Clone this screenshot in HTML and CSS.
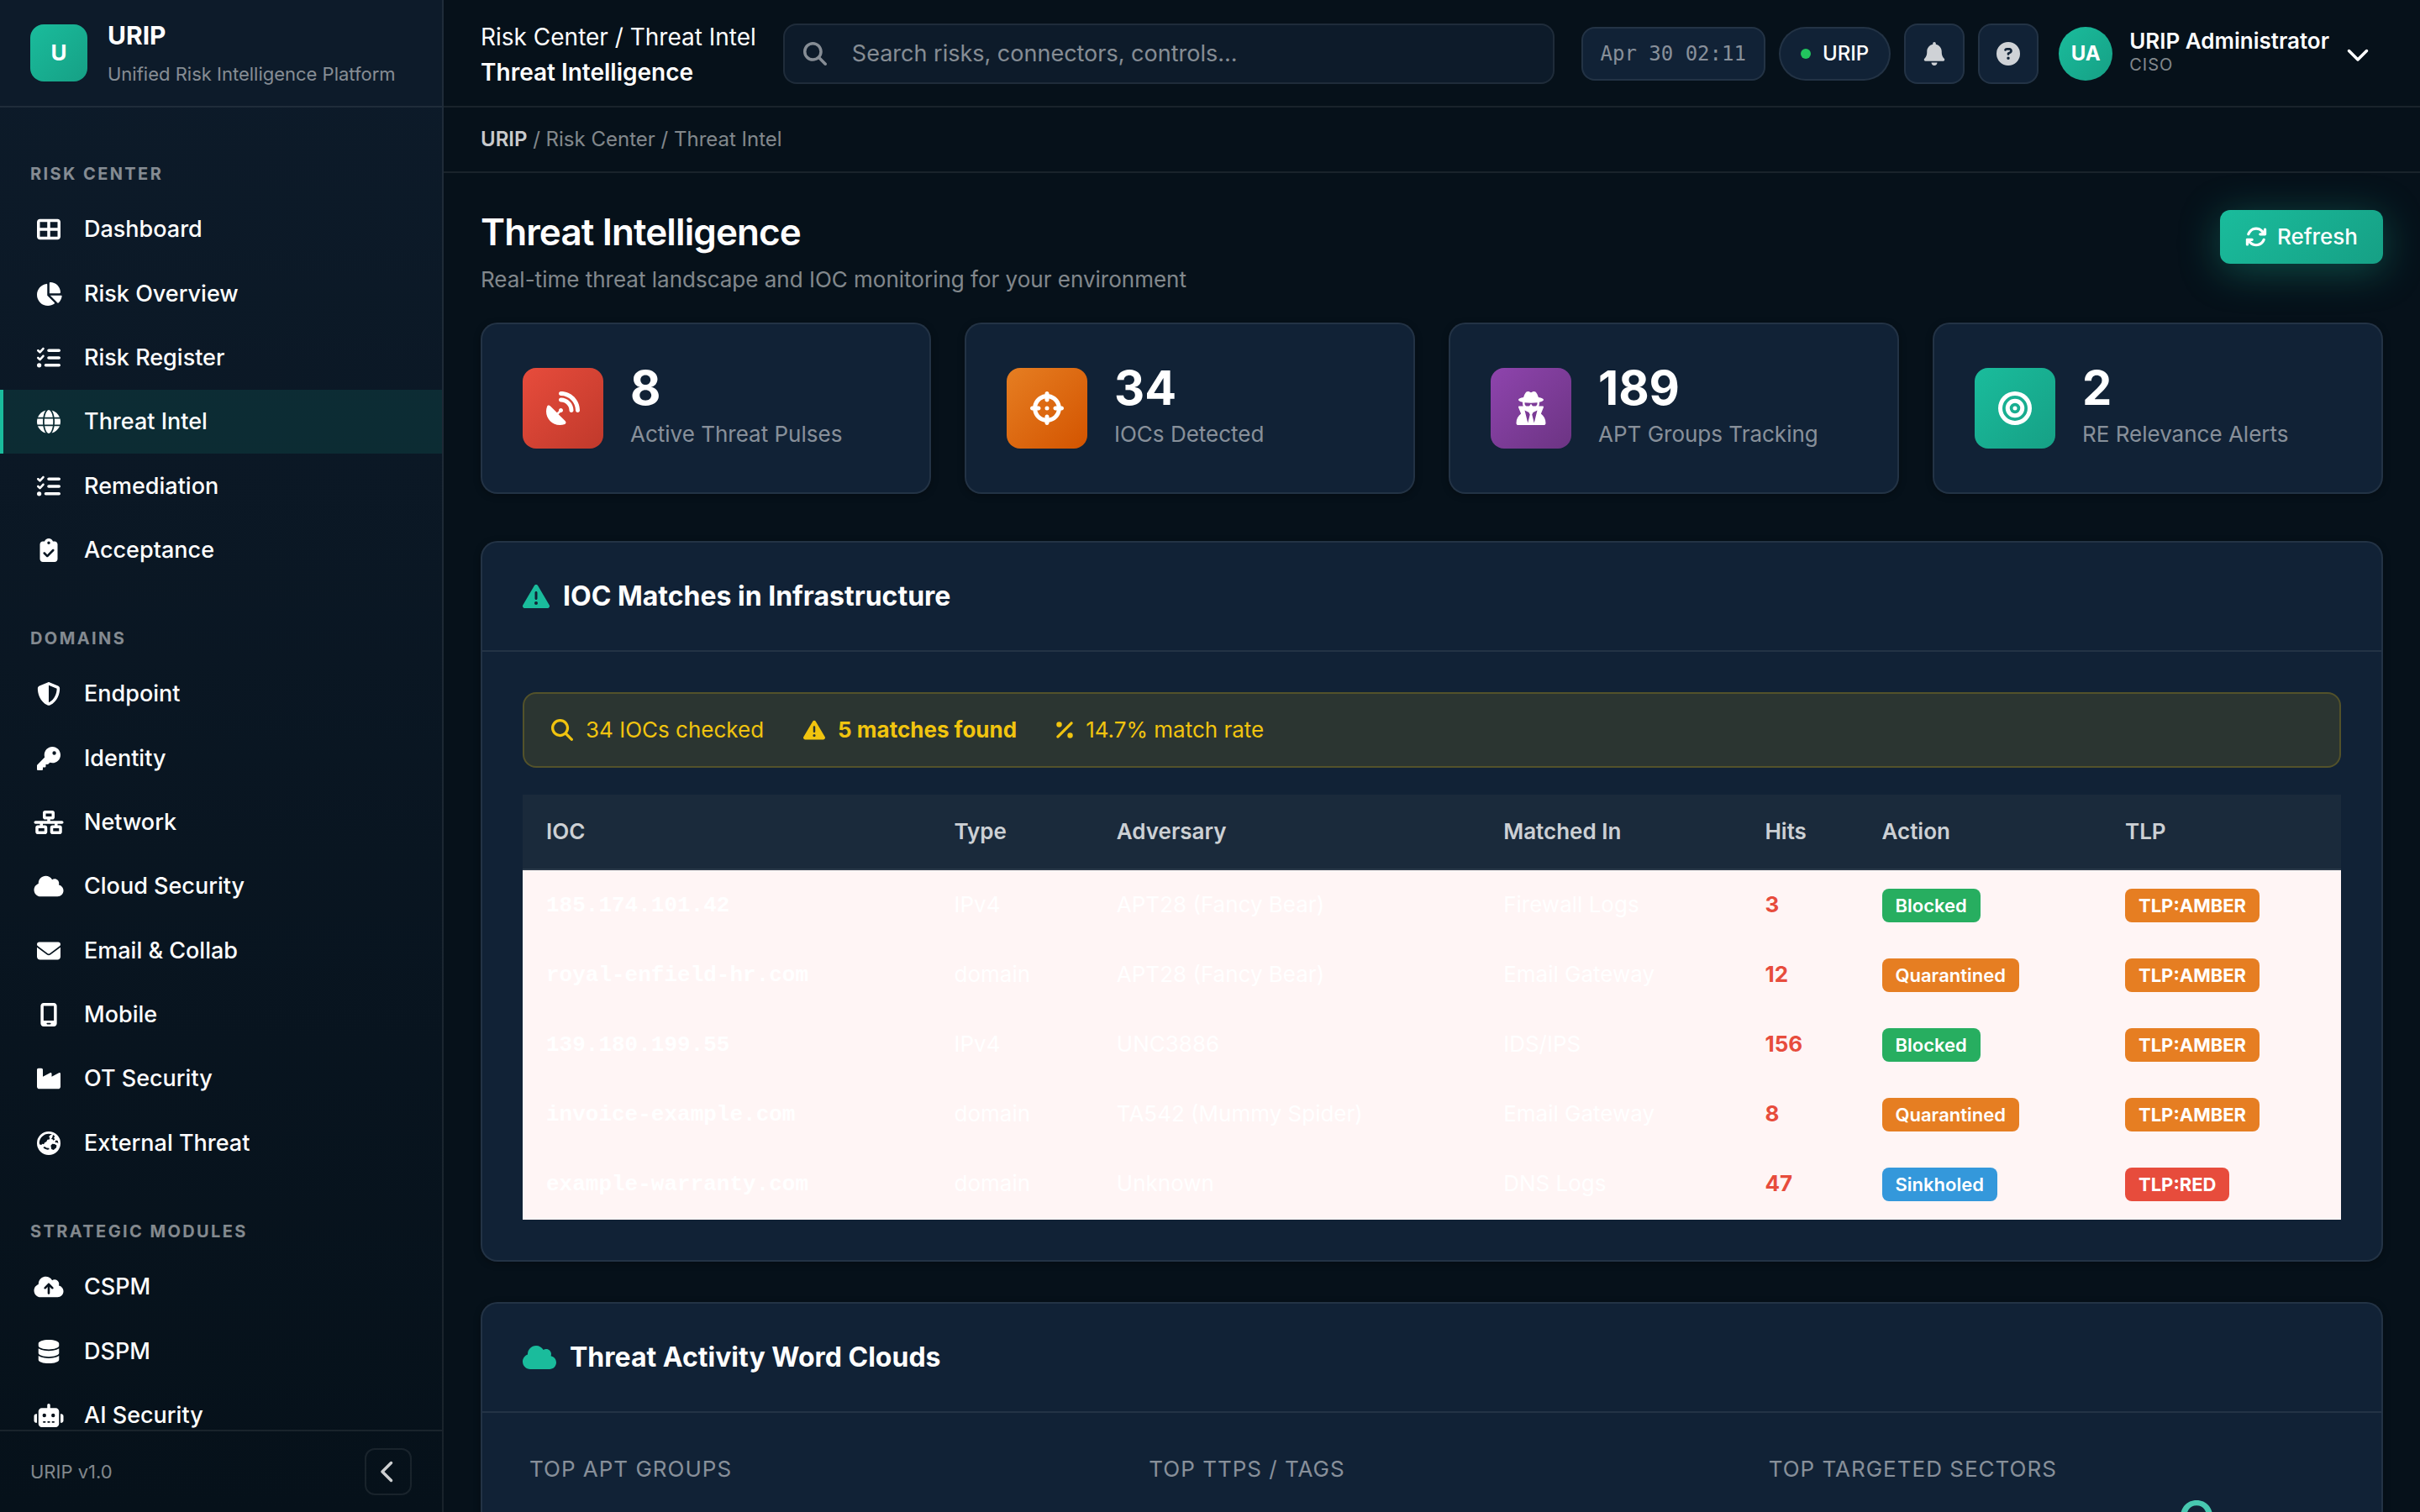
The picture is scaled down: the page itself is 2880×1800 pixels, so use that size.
FILE: index.html
```html
<!DOCTYPE html>
<html lang="en">
<head>
  <meta charset="UTF-8">
  <meta name="viewport" content="width=device-width, initial-scale=1.0">
  <title>URIP - Threat Intelligence</title>
  <link rel="stylesheet" href="styles.css">
</head>
<body>

<!-- Icon sprite -->
<svg class="sprite" aria-hidden="true">
  <symbol id="i-grid" viewBox="0 0 512 512"><path d="M448 96V224H288V96H448zm0 192V416H288V288H448zM224 224H64V96H224V224zM64 288H224V416H64V288zM64 32C28.700 32 0 60.700 0 96V416c0 35.300 28.700 64 64 64H448c35.300 0 64-28.700 64-64V96c0-35.300-28.700-64-64-64H64z"/></symbol>
  <symbol id="i-pie" viewBox="0 0 576 512"><path d="M304 240V16.600c0-9 7-16.600 16-16.600C443.700 0 544 100.300 544 224c0 9-7.600 16-16.600 16H304zM32 272C32 150.700 122.100 50.300 239 34.300c9.200-1.300 17 6.100 17 15.400V288L412.500 444.500c6.700 6.700 6.200 17.700-1.500 23.100C371.800 495.600 323.800 512 272 512C139.500 512 32 404.600 32 272zm526.400 16c9.300 0 16.600 7.800 15.400 17c-7.700 55.900-34.600 105.600-73.900 142.300c-6 5.600-15.400 5.200-21.200-.7L320 288H558.400z"/></symbol>
  <symbol id="i-list" viewBox="0 0 512 512"><path d="M152.100 38.200c9.900 8.900 10.700 24 1.800 33.900l-72 80c-4.400 4.900-10.600 7.800-17.200 7.900s-12.900-2.400-17.600-7L7 113C-2.300 103.600-2.300 88.400 7 79s24.600-9.400 33.900 0l22.100 22.100 55.100-61.200c8.900-9.900 24-10.700 33.900-1.800zm0 160c9.900 8.900 10.700 24 1.800 33.900l-72 80c-4.400 4.900-10.600 7.800-17.200 7.900s-12.900-2.400-17.600-7L7 273c-9.400-9.400-9.400-24.600 0-33.900s24.600-9.400 33.900 0l22.100 22.100 55.100-61.200c8.900-9.900 24-10.700 33.900-1.800zM224 96c0-17.700 14.300-32 32-32H480c17.700 0 32 14.300 32 32s-14.300 32-32 32H256c-17.700 0-32-14.300-32-32zm0 160c0-17.700 14.300-32 32-32H480c17.700 0 32 14.300 32 32s-14.300 32-32 32H256c-17.700 0-32-14.300-32-32zM160 416c0-17.700 14.300-32 32-32H480c17.700 0 32 14.300 32 32s-14.300 32-32 32H192c-17.700 0-32-14.300-32-32zM48 368a48 48 0 1 1 0 96 48 48 0 1 1 0-96z"/></symbol>
  <symbol id="i-globe" viewBox="0 0 512 512"><path d="M352 256c0 22.200-1.200 43.600-3.300 64H163.300c-2.200-20.400-3.300-41.800-3.300-64s1.200-43.600 3.300-64H348.700c2.200 20.400 3.300 41.800 3.300 64zm28.800-64H503.900c5.300 20.500 8.100 41.900 8.100 64s-2.800 43.500-8.100 64H380.800c2.100-20.600 3.200-42 3.200-64s-1.100-43.400-3.200-64zm112.600-32H376.700c-10-63.900-29.800-117.400-55.300-151.600c78.300 20.700 142 77.500 171.900 151.600zm-149.100 0H167.700c6.100-36.400 15.500-68.600 27-94.700c10.500-23.600 22.200-40.700 33.500-51.500C239.400 3.200 248.700 0 256 0s16.600 3.200 27.800 13.800c11.300 10.800 23 27.900 33.500 51.500c11.600 26 20.900 58.200 27 94.700zm-209 0H18.600C48.600 85.900 112.200 29.100 190.600 8.400C165.100 42.600 145.300 96.100 135.300 160zM8.100 192H131.200c-2.100 20.600-3.200 42-3.200 64s1.100 43.400 3.200 64H8.100C2.800 299.500 0 278.100 0 256s2.800-43.500 8.100-64zM194.700 446.600c-11.600-26-20.900-58.200-27-94.600H344.300c-6.100 36.400-15.500 68.600-27 94.600c-10.500 23.600-22.200 40.700-33.500 51.500C272.600 508.800 263.300 512 256 512s-16.600-3.200-27.800-13.800c-11.300-10.800-23-27.900-33.500-51.500zM135.300 352c10 63.900 29.800 117.400 55.300 151.600C112.200 482.900 48.600 426.100 18.600 352H135.300zm358.100 0c-30 74.100-93.600 130.900-171.900 151.600c25.500-34.200 45.200-87.700 55.300-151.600H493.400z"/></symbol>
  <symbol id="i-clipboard" viewBox="0 0 384 512"><path d="M192 0c-41.800 0-77.400 26.700-90.500 64H64C28.700 64 0 92.700 0 128V448c0 35.300 28.700 64 64 64H320c35.300 0 64-28.700 64-64V128c0-35.300-28.700-64-64-64H282.500C269.400 26.700 233.800 0 192 0zm0 64a32 32 0 1 1 0 64 32 32 0 1 1 0-64zM305 273L177 401c-9.400 9.400-24.600 9.400-33.900 0L79 337c-9.400-9.400-9.400-24.600 0-33.900s24.600-9.400 33.900 0l47 47L271 239c9.400-9.400 24.600-9.400 33.900 0s9.400 24.600 0 33.900z"/></symbol>
  <symbol id="i-shield" viewBox="0 0 512 512"><path d="M256 0c4.600 0 9.200 1 13.400 2.900L457.700 82.800c22 9.300 38.400 31 38.300 57.200c-.5 99.200-41.300 280.700-213.600 363.200c-16.700 8-36.100 8-52.800 0C57.300 420.700 16.500 239.200 16 140c-.1-26.200 16.300-47.900 38.300-57.200L242.700 2.900C246.800 1 251.400 0 256 0zm0 66.800V444.800C394 378 431.100 230.100 432 141.400L256 66.800z"/></symbol>
  <symbol id="i-key" viewBox="0 0 512 512"><path d="M336 352c97.200 0 176-78.800 176-176S433.200 0 336 0S160 78.800 160 176c0 18.700 2.900 36.800 8.300 53.700L7 391c-4.500 4.500-7 10.600-7 17v80c0 13.300 10.700 24 24 24h80c13.300 0 24-10.700 24-24V448h40c13.300 0 24-10.700 24-24V384h40c6.400 0 12.500-2.500 17-7l33.300-33.300c16.900 5.400 35 8.300 53.700 8.300zM376 96a40 40 0 1 1 0 80 40 40 0 1 1 0-80z"/></symbol>
  <symbol id="i-network" viewBox="0 0 640 512"><path d="M256 64H384v64H256V64zM240 0c-26.500 0-48 21.500-48 48v96c0 26.500 21.500 48 48 48h48v32H32c-17.700 0-32 14.300-32 32s14.300 32 32 32h96v32H80c-26.500 0-48 21.500-48 48v96c0 26.500 21.500 48 48 48H240c26.500 0 48-21.500 48-48V368c0-26.500-21.500-48-48-48H192V288H448v32H400c-26.500 0-48 21.500-48 48v96c0 26.500 21.500 48 48 48H560c26.500 0 48-21.500 48-48V368c0-26.500-21.500-48-48-48H512V288h96c17.700 0 32-14.300 32-32s-14.300-32-32-32H352V192h48c26.500 0 48-21.500 48-48V48c0-26.500-21.500-48-48-48H240zM96 448V384H224v64H96zm320-64H544v64H416V384z"/></symbol>
  <symbol id="i-cloud" viewBox="0 0 640 512"><path d="M0 336c0 79.500 64.500 144 144 144H512c70.700 0 128-57.300 128-128c0-61.900-44-113.600-102.400-125.400c4.100-10.700 6.400-22.400 6.400-34.600c0-53-43-96-96-96c-19.700 0-38.100 6-53.300 16.200C367 64.200 315.300 32 256 32C167.600 32 96 103.600 96 192c0 2.700 .1 5.400 .2 8.100C40.200 219.800 0 273.200 0 336z"/></symbol>
  <symbol id="i-mail" viewBox="0 0 512 512"><path d="M48 64C21.500 64 0 85.500 0 112c0 15.100 7.100 29.300 19.200 38.400L236.800 313.600c11.400 8.500 27 8.500 38.400 0L492.800 150.400c12.100-9.100 19.200-23.300 19.200-38.400c0-26.500-21.500-48-48-48H48zM0 176V384c0 35.300 28.700 64 64 64H448c35.300 0 64-28.700 64-64V176L294.400 339.200c-22.800 17.100-54 17.100-76.800 0L0 176z"/></symbol>
  <symbol id="i-mobile" viewBox="0 0 384 512"><path d="M16 64C16 28.700 44.700 0 80 0H304c35.300 0 64 28.700 64 64V448c0 35.300-28.700 64-64 64H80c-35.300 0-64-28.700-64-64V64zM144 448c0 8.800 7.200 16 16 16h64c8.800 0 16-7.200 16-16s-7.200-16-16-16H160c-8.800 0-16 7.200-16 16zM304 64H80V384H304V64z"/></symbol>
  <symbol id="i-factory" viewBox="0 0 512 512"><path d="M32 32C14.300 32 0 46.300 0 64V432c0 26.500 21.500 48 48 48H464c26.500 0 48-21.500 48-48V152.200c0-18.200-19.400-29.700-35.400-21.100L320 215.400V152.200c0-18.200-19.400-29.700-35.400-21.100L128 215.400V64c0-17.700-14.300-32-32-32H32z"/></symbol>
  <symbol id="i-earth" viewBox="0 0 512 512"><path fill-rule="evenodd" d="M256 0a256 256 0 1 1 0 512a256 256 0 1 1 0-512zM50 250c4-112 96-202 206-202c28 0 50 4 72 12l-36 18-34 38 22 20-10 36-42 8-24 46-36 16-20 38-34-10-18 22-36-8zM348 74l40 26-20 40 24 28-34 30-20-30-28-4 24-34zM452 200l12 60-30-22-32 4-8-26 22-22zM300 306l34-36 50 2 44 28-8 50-60 54-46-20zM168 330l40 26 54 6 4 26-40 8-62-20-30-30z"/></symbol>
  <symbol id="i-cloud-up" viewBox="0 0 640 512"><path d="M144 480C64.500 480 0 415.500 0 336c0-62.800 40.200-116.200 96.200-135.900c-.1-2.700-.2-5.400-.2-8.100c0-88.400 71.600-160 160-160c59.300 0 111 32.200 138.700 80.200C409.900 102 428.300 96 448 96c53 0 96 43 96 96c0 12.200-2.300 23.800-6.400 34.600C596 238.400 640 290.100 640 352c0 70.700-57.300 128-128 128H144zm79-217c-9.400 9.400-9.400 24.600 0 33.900s24.600 9.400 33.900 0l39-39V392c0 13.300 10.700 24 24 24s24-10.700 24-24V257.900l39 39c9.400 9.400 24.600 9.400 33.900 0s9.400-24.600 0-33.900l-80-80c-9.400-9.400-24.600-9.400-33.900 0l-80 80z"/></symbol>
  <symbol id="i-database" viewBox="0 0 448 512"><path d="M448 80v48c0 44.200-100.300 80-224 80S0 172.200 0 128V80C0 35.800 100.300 0 224 0S448 35.800 448 80zM393.200 214.700c20.800-7.400 39.900-16.900 54.800-28.600V288c0 44.200-100.300 80-224 80S0 332.200 0 288V186.100c14.900 11.800 34 21.200 54.800 28.600C99.700 230.700 159.500 240 224 240s124.300-9.300 169.200-25.300zM0 346.100c14.900 11.800 34 21.200 54.800 28.600C99.700 390.700 159.500 400 224 400s124.300-9.300 169.200-25.300c20.800-7.400 39.900-16.900 54.800-28.600V432c0 44.200-100.300 80-224 80S0 476.200 0 432V346.100z"/></symbol>
  <symbol id="i-robot" viewBox="0 0 640 512"><path d="M320 0c17.700 0 32 14.300 32 32V96H472c39.800 0 72 32.200 72 72V440c0 39.800-32.200 72-72 72H168c-39.800 0-72-32.200-72-72V168c0-39.800 32.200-72 72-72H288V32c0-17.700 14.300-32 32-32zM208 384c-8.800 0-16 7.200-16 16s7.200 16 16 16h32c8.800 0 16-7.200 16-16s-7.200-16-16-16H208zm96 0c-8.800 0-16 7.200-16 16s7.200 16 16 16h32c8.800 0 16-7.200 16-16s-7.200-16-16-16H304zm96 0c-8.800 0-16 7.200-16 16s7.200 16 16 16h32c8.800 0 16-7.200 16-16s-7.200-16-16-16H400zM264 256a40 40 0 1 0 -80 0 40 40 0 1 0 80 0zm152 40a40 40 0 1 0 0-80 40 40 0 1 0 0 80zM48 224H64V416H48c-26.500 0-48-21.500-48-48V272c0-26.500 21.500-48 48-48zm544 0c26.500 0 48 21.500 48 48v96c0 26.500-21.500 48-48 48H576V224h16z"/></symbol>
  <symbol id="i-left" viewBox="0 0 320 512"><path d="M9.400 233.400c-12.500 12.500-12.500 32.800 0 45.300l192 192c12.500 12.500 32.800 12.500 45.300 0s12.500-32.800 0-45.300L77.300 256 246.600 86.600c12.500-12.500 12.500-32.800 0-45.300s-32.800-12.500-45.300 0l-192 192z"/></symbol>
  <symbol id="i-down" viewBox="0 0 512 512"><path d="M233.400 406.600c12.500 12.500 32.800 12.500 45.300 0l192-192c12.500-12.500 12.500-32.800 0-45.300s-32.800-12.500-45.300 0L256 338.700 86.600 169.400c-12.500-12.500-32.800-12.500-45.300 0s-12.500 32.800 0 45.300l192 192z"/></symbol>
  <symbol id="i-search" viewBox="0 0 512 512"><path d="M416 208c0 45.900-14.900 88.300-40 122.700L502.600 457.400c12.500 12.500 12.500 32.800 0 45.300s-32.800 12.500-45.300 0L330.700 376c-34.400 25.200-76.800 40-122.700 40C93.100 416 0 322.900 0 208S93.100 0 208 0S416 93.100 416 208zM208 352a144 144 0 1 0 0-288 144 144 0 1 0 0 288z"/></symbol>
  <symbol id="i-bell" viewBox="0 0 448 512"><path d="M224 0c-17.700 0-32 14.300-32 32V51.200C119 66 64 130.600 64 208v18.800c0 47-17.300 92.400-48.500 127.600l-7.400 8.300c-8.400 9.400-10.400 22.900-5.300 34.400S19.400 416 32 416H416c12.600 0 24-7.400 29.200-18.900s3.100-25-5.300-34.400l-7.400-8.300C401.300 319.200 384 273.900 384 226.800V208c0-77.400-55-142-128-156.800V32c0-17.700-14.300-32-32-32zm45.300 493.300c12-12 18.700-28.300 18.700-45.300H160c0 17 6.700 33.300 18.700 45.300s28.300 18.700 45.300 18.700s33.300-6.700 45.300-18.700z"/></symbol>
  <symbol id="i-help" viewBox="0 0 512 512"><path d="M256 512A256 256 0 1 0 256 0a256 256 0 1 0 0 512zM169.800 165.300c7.900-22.300 29.100-37.300 52.800-37.300h58.300c34.900 0 63.100 28.300 63.100 63.100c0 22.600-12.100 43.500-31.700 54.800L280 264.400c-.2 13-10.900 23.600-24 23.600c-13.300 0-24-10.700-24-24V250.500c0-8.600 4.600-16.500 12.100-20.800l44.300-25.400c4.700-2.700 7.600-7.700 7.600-13.100c0-8.400-6.800-15.100-15.100-15.100H222.600c-3.400 0-6.400 2.100-7.500 5.300l-.4 1.200c-4.400 12.500-18.200 19-30.600 14.600s-19-18.200-14.600-30.600l.4-1.200zM224 352a32 32 0 1 1 64 0 32 32 0 1 1 -64 0z"/></symbol>
  <symbol id="i-refresh" viewBox="0 0 512 512"><path d="M105.100 202.600c7.700-21.800 20.200-42.300 37.800-59.800c62.500-62.500 163.800-62.500 226.300 0L386.300 160H352c-17.700 0-32 14.300-32 32s14.300 32 32 32H463.900c17.700 0 32-14.300 32-32V80c0-17.700-14.300-32-32-32s-32 14.300-32 32v35.200L414.400 97.600c-87.500-87.500-229.300-87.500-316.800 0C73.200 122 55.600 150.700 44.800 181.400c-5.900 16.700 2.900 34.900 19.500 40.800s34.900-2.900 40.800-19.500zM39 289.300c-5 1.500-9.800 4.200-13.700 8.200c-4 4-6.700 8.800-8.100 14c-.3 1.200-.6 2.500-.8 3.800c-.3 1.700-.4 3.400-.4 5.100V432c0 17.700 14.300 32 32 32s32-14.300 32-32V396.900l17.600 17.500c87.500 87.400 229.300 87.400 316.700 0c24.400-24.400 42.100-53.100 52.900-83.700c5.900-16.700-2.900-34.900-19.500-40.800s-34.900 2.900-40.800 19.500c-7.700 21.800-20.200 42.300-37.800 59.800c-62.500 62.500-163.800 62.500-226.300 0l-.1-.1L125.600 352H160c17.700 0 32-14.300 32-32s-14.300-32-32-32H48.400c-1.600 0-3.200 .1-4.800 .3s-3.100 .5-4.600 1z"/></symbol>
  <symbol id="i-dish" viewBox="0 0 512 512"><path d="M192 32c0-17.700 14.300-32 32-32C383.100 0 512 128.900 512 288c0 17.700-14.300 32-32 32s-32-14.300-32-32C448 164.300 347.700 64 224 64c-17.700 0-32-14.300-32-32zM60.600 220.600L164.700 324.700l28.400-28.400c-.7-2.600-1.100-5.400-1.100-8.300c0-17.700 14.300-32 32-32s32 14.300 32 32s-14.300 32-32 32c-2.900 0-5.600-.4-8.300-1.100l-28.400 28.400L291.400 451.400c14.500 14.500 11.800 38.800-7.300 46.300C260.500 506.900 234.900 512 208 512C93.100 512 0 418.900 0 304c0-26.900 5.100-52.500 14.400-76.100c7.500-19 31.800-21.800 46.300-7.300zM224 96c106 0 192 86 192 192c0 17.700-14.300 32-32 32s-32-14.300-32-32c0-70.700-57.300-128-128-128c-17.700 0-32-14.300-32-32s14.300-32 32-32z"/></symbol>
  <symbol id="i-crosshairs" viewBox="0 0 512 512"><path d="M256 0c17.700 0 32 14.300 32 32V42.400c93.700 13.900 167.700 88 181.600 181.600H480c17.700 0 32 14.300 32 32s-14.300 32-32 32H469.600c-13.900 93.700-88 167.700-181.600 181.600V480c0 17.700-14.300 32-32 32s-32-14.300-32-32V469.600C130.300 455.700 56.300 381.700 42.400 288H32c-17.700 0-32-14.300-32-32s14.300-32 32-32H42.400C56.300 130.300 130.300 56.300 224 42.400V32c0-17.700 14.300-32 32-32zM107.400 288c12.500 58.300 58.400 104.100 116.600 116.600V384c0-17.700 14.300-32 32-32s32 14.300 32 32v20.600c58.300-12.500 104.100-58.400 116.600-116.600H384c-17.700 0-32-14.300-32-32s14.300-32 32-32h20.600C392.100 165.700 346.300 119.900 288 107.400V128c0 17.700-14.300 32-32 32s-32-14.300-32-32V107.400C165.700 119.900 119.900 165.700 107.400 224H128c17.700 0 32 14.300 32 32s-14.300 32-32 32H107.400zM256 224a32 32 0 1 1 0 64 32 32 0 1 1 0-64z"/></symbol>
  <symbol id="i-spy" viewBox="0 0 448 512"><path d="M224 16c-6.700 0-10.800-2.800-15.500-6.100C201.900 5.400 194 0 176 0c-30.500 0-52 43.700-66 89.400C62.700 98.100 32 112.200 32 128c0 14.300 25 27.100 64.600 35.900c-.4 4-.6 8-.6 12.100c0 17 3.300 33.200 9.300 48H45.400C38 224 32 230 32 237.400c0 1.700 .3 3.400 1 5l38.800 96.900C28.200 371.800 0 423.800 0 482.300C0 498.700 13.300 512 29.700 512H418.300c16.400 0 29.700-13.300 29.700-29.700c0-58.500-28.200-110.400-71.700-143L415 242.400c.6-1.600 1-3.300 1-5c0-7.400-6-13.400-13.400-13.400H342.700c6-14.800 9.300-31 9.300-48c0-4.100-.2-8.100-.6-12.100C391 155.100 416 142.300 416 128c0-15.800-30.700-29.900-78-38.600C324 43.700 302.500 0 272 0c-18 0-25.900 5.400-32.500 9.900c-4.800 3.300-8.800 6.100-15.500 6.100zm56 208H267.600c-16.500 0-31.100-10.600-36.300-26.200c-2.300-7-12.200-7-14.500 0c-5.200 15.600-19.900 26.200-36.300 26.200H168c-22.100 0-40-17.900-40-40V169.600c28.200 4.100 61 6.400 96 6.400s67.800-2.300 96-6.400V184c0 22.100-17.900 40-40 40zm-88 96l16 32L176 480 128 288l64 32zm128-32L272 480 240 352l16-32 64-32z"/></symbol>
  <symbol id="i-bullseye" viewBox="0 0 512 512"><path d="M448 256A192 192 0 1 0 64 256a192 192 0 1 0 384 0zM0 256a256 256 0 1 1 512 0A256 256 0 1 1 0 256zm256 80a80 80 0 1 0 0-160 80 80 0 1 0 0 160zm0-224a144 144 0 1 1 0 288 144 144 0 1 1 0-288zM224 256a32 32 0 1 1 64 0 32 32 0 1 1 -64 0z"/></symbol>
  <symbol id="i-warning" viewBox="0 0 512 512"><path d="M256 32c14.200 0 27.300 7.500 34.500 19.800l216 368c7.300 12.400 7.300 27.700 .2 40.100S486.300 480 472 480H40c-14.300 0-27.600-7.700-34.700-20.100s-7-27.800 .2-40.100l216-368C228.700 39.500 241.800 32 256 32zm0 128c-13.300 0-24 10.700-24 24V296c0 13.300 10.700 24 24 24s24-10.700 24-24V184c0-13.300-10.700-24-24-24zm32 224a32 32 0 1 0 -64 0 32 32 0 1 0 64 0z"/></symbol>
  <symbol id="i-percent" viewBox="0 0 384 512"><path d="M374.600 118.600c12.500-12.500 12.500-32.800 0-45.300s-32.800-12.500-45.300 0l-320 320c-12.500 12.500-12.500 32.800 0 45.300s32.800 12.500 45.300 0l320-320zM128 128A64 64 0 1 0 0 128a64 64 0 1 0 128 0zM384 384a64 64 0 1 0 -128 0 64 64 0 1 0 128 0z"/></symbol>
</svg>

<div class="app">
  <aside class="sidebar">
    <div class="brand">
      <div class="brand-logo">U</div>
      <div class="brand-text">
        <div class="brand-name">URIP</div>
        <div class="brand-sub">Unified Risk Intelligence Platform</div>
      </div>
    </div>

    <nav class="nav">
      <section class="nav-section">
        <h2 class="nav-label">Risk Center</h2>
        <a href="#" class="nav-link"><span class="nav-icon"><svg class="icon"><use href="#i-grid"/></svg></span>Dashboard</a>
        <a href="#" class="nav-link"><span class="nav-icon"><svg class="icon icon-pie"><use href="#i-pie"/></svg></span>Risk Overview</a>
        <a href="#" class="nav-link"><span class="nav-icon"><svg class="icon"><use href="#i-list"/></svg></span>Risk Register</a>
        <a href="#" class="nav-link active"><span class="nav-icon"><svg class="icon"><use href="#i-globe"/></svg></span>Threat Intel</a>
        <a href="#" class="nav-link"><span class="nav-icon"><svg class="icon"><use href="#i-list"/></svg></span>Remediation</a>
        <a href="#" class="nav-link"><span class="nav-icon"><svg class="icon"><use href="#i-clipboard"/></svg></span>Acceptance</a>
      </section>
      <section class="nav-section">
        <h2 class="nav-label">Domains</h2>
        <a href="#" class="nav-link"><span class="nav-icon"><svg class="icon"><use href="#i-shield"/></svg></span>Endpoint</a>
        <a href="#" class="nav-link"><span class="nav-icon"><svg class="icon"><use href="#i-key"/></svg></span>Identity</a>
        <a href="#" class="nav-link"><span class="nav-icon"><svg class="icon icon-wide"><use href="#i-network"/></svg></span>Network</a>
        <a href="#" class="nav-link"><span class="nav-icon"><svg class="icon icon-wide"><use href="#i-cloud"/></svg></span>Cloud Security</a>
        <a href="#" class="nav-link"><span class="nav-icon"><svg class="icon"><use href="#i-mail"/></svg></span>Email &amp; Collab</a>
        <a href="#" class="nav-link"><span class="nav-icon"><svg class="icon"><use href="#i-mobile"/></svg></span>Mobile</a>
        <a href="#" class="nav-link"><span class="nav-icon"><svg class="icon"><use href="#i-factory"/></svg></span>OT Security</a>
        <a href="#" class="nav-link"><span class="nav-icon"><svg class="icon"><use href="#i-earth"/></svg></span>External Threat</a>
      </section>
      <section class="nav-section">
        <h2 class="nav-label">Strategic Modules</h2>
        <a href="#" class="nav-link"><span class="nav-icon"><svg class="icon icon-wide"><use href="#i-cloud-up"/></svg></span>CSPM</a>
        <a href="#" class="nav-link"><span class="nav-icon"><svg class="icon"><use href="#i-database"/></svg></span>DSPM</a>
        <a href="#" class="nav-link"><span class="nav-icon"><svg class="icon icon-wide"><use href="#i-robot"/></svg></span>AI Security</a>
      </section>
    </nav>

    <div class="sidebar-footer">
      <span>URIP v1.0</span>
      <button type="button" class="collapse-btn" aria-label="Collapse sidebar"><svg class="icon"><use href="#i-left"/></svg></button>
    </div>
  </aside>

  <div class="page">
    <header class="topbar">
      <div class="topbar-title">
        <div>Risk Center / Threat Intel</div>
        <strong>Threat Intelligence</strong>
      </div>
      <label class="search">
        <svg class="icon"><use href="#i-search"/></svg>
        <input type="search" placeholder="Search risks, connectors, controls..." aria-label="Search">
      </label>
      <div class="topbar-tools">
        <time class="clock">Apr 30 02:11</time>
        <div class="tenant"><span class="dot"></span>URIP</div>
        <button type="button" class="icon-btn" aria-label="Notifications"><svg class="icon"><use href="#i-bell"/></svg></button>
        <button type="button" class="icon-btn" aria-label="Help"><svg class="icon"><use href="#i-help"/></svg></button>
        <button type="button" class="user">
          <span class="avatar">UA</span>
          <span class="user-text">
            <span class="user-name">URIP Administrator</span>
            <span class="user-role">CISO</span>
          </span>
          <svg class="icon"><use href="#i-down"/></svg>
        </button>
      </div>
    </header>

    <div class="breadcrumb"><strong>URIP</strong> / Risk Center / Threat Intel</div>

    <main class="content">
      <div class="page-header">
        <div>
          <h1>Threat Intelligence</h1>
          <p>Real-time threat landscape and IOC monitoring for your environment</p>
        </div>
        <button type="button" class="btn-refresh"><svg class="icon"><use href="#i-refresh"/></svg>Refresh</button>
      </div>

      <div class="stats">
        <div class="stat">
          <div class="stat-icon red"><svg class="icon"><use href="#i-dish"/></svg></div>
          <div><div class="stat-value">8</div><div class="stat-label">Active Threat Pulses</div></div>
        </div>
        <div class="stat">
          <div class="stat-icon orange"><svg class="icon"><use href="#i-crosshairs"/></svg></div>
          <div><div class="stat-value">34</div><div class="stat-label">IOCs Detected</div></div>
        </div>
        <div class="stat">
          <div class="stat-icon purple"><svg class="icon"><use href="#i-spy"/></svg></div>
          <div><div class="stat-value">189</div><div class="stat-label">APT Groups Tracking</div></div>
        </div>
        <div class="stat">
          <div class="stat-icon teal"><svg class="icon"><use href="#i-bullseye"/></svg></div>
          <div><div class="stat-value">2</div><div class="stat-label">RE Relevance Alerts</div></div>
        </div>
      </div>

      <section class="card">
        <div class="card-header">
          <svg class="icon"><use href="#i-warning"/></svg>
          <h2>IOC Matches in Infrastructure</h2>
        </div>
        <div class="card-body">
          <div class="match-summary">
            <span><svg class="icon"><use href="#i-search"/></svg>34 IOCs checked</span>
            <strong><svg class="icon"><use href="#i-warning"/></svg>5 matches found</strong>
            <span><svg class="icon icon-percent"><use href="#i-percent"/></svg>14.7% match rate</span>
          </div>
          <table class="ioc-table">
            <thead>
              <tr><th>IOC</th><th>Type</th><th>Adversary</th><th>Matched In</th><th>Hits</th><th>Action</th><th>TLP</th></tr>
            </thead>
            <tbody>
              <tr>
                <td><code>185.174.101.42</code></td><td>IPv4</td><td>APT28 (Fancy Bear)</td><td>Firewall Logs</td>
                <td class="hits">3</td><td><span class="badge green">Blocked</span></td><td><span class="badge tlp amber">TLP:AMBER</span></td>
              </tr>
              <tr>
                <td><code>royal-enfield-hr.com</code></td><td>domain</td><td>APT28 (Fancy Bear)</td><td>Email Gateway</td>
                <td class="hits">12</td><td><span class="badge amber">Quarantined</span></td><td><span class="badge tlp amber">TLP:AMBER</span></td>
              </tr>
              <tr>
                <td><code>139.180.199.55</code></td><td>IPv4</td><td>UNC3886</td><td>IDS/IPS</td>
                <td class="hits">156</td><td><span class="badge green">Blocked</span></td><td><span class="badge tlp amber">TLP:AMBER</span></td>
              </tr>
              <tr>
                <td><code>invoice-example.com</code></td><td>domain</td><td>TA542 (Mummy Spider)</td><td>Email Gateway</td>
                <td class="hits">8</td><td><span class="badge amber">Quarantined</span></td><td><span class="badge tlp amber">TLP:AMBER</span></td>
              </tr>
              <tr>
                <td><code>example-warranty.com</code></td><td>domain</td><td>Unknown</td><td>DNS Logs</td>
                <td class="hits">47</td><td><span class="badge blue">Sinkholed</span></td><td><span class="badge tlp crimson">TLP:RED</span></td>
              </tr>
            </tbody>
          </table>
        </div>
      </section>

      <section class="card">
        <div class="card-header">
          <svg class="icon icon-wide"><use href="#i-cloud"/></svg>
          <h2>Threat Activity Word Clouds</h2>
        </div>
        <div class="card-body clouds">
          <div class="cloud"><h3>Top APT Groups</h3></div>
          <div class="cloud"><h3>Top TTPs / Tags</h3></div>
          <div class="cloud"><h3>Top Targeted Sectors</h3><div class="cloud-canvas"><span class="cloud-word">o</span></div></div>
        </div>
      </section>
    </main>
  </div>
</div>

</body>
</html>
```
FILE: styles.css
```css
:root {
  --bg: #06111a;
  --surface: #0d1b2a;
  --card: #112236;
  --line: rgba(255, 255, 255, 0.08);
  --muted: rgba(255, 255, 255, 0.5);
  --soft: rgba(255, 255, 255, 0.8);
  --teal: #1abc9c;
  --teal-dark: #16a085;
}
* {
  box-sizing: border-box;
}
body {
  margin: 0;
  background: var(--bg);
  color: #fff;
  font-family: Inter, "Liberation Sans", sans-serif;
  font-size: 28px;
  line-height: 42px;
  -webkit-font-smoothing: antialiased;
}
h1, h2, h3, p {
  margin: 0;
}
button, input {
  font: inherit;
  color: inherit;
}
a {
  color: inherit;
  text-decoration: none;
}
.sprite {
  display: none;
}
.icon {
  width: 28px;
  height: 28px;
  flex: none;
  fill: currentColor;
}
.icon-wide {
  width: 36px;
}
.icon-pie {
  width: 32px;
}
.app {
  display: grid;
  grid-template-columns: 528px 1fr;
  height: 100vh;
  overflow: hidden;
}

/* Sidebar */
.sidebar {
  display: flex;
  flex-direction: column;
  min-height: 0;
  border-right: 2px solid var(--line);
  background: linear-gradient(180deg, #0d1b2a, #06111a);
}
.brand {
  display: flex;
  align-items: center;
  gap: 24px;
  height: 128px;
  padding: 0 36px;
  border-bottom: 2px solid var(--line);
  background: var(--surface);
}
.brand-logo {
  display: grid;
  place-items: center;
  width: 68px;
  height: 68px;
  border-radius: 16px;
  background: linear-gradient(135deg, var(--teal), var(--teal-dark));
  font-size: 26px;
  font-weight: 700;
}
.brand-text {
  padding-top: 4px;
}
.brand-name {
  margin-bottom: 4px;
  font-size: 30px;
  font-weight: 700;
}
.brand-sub {
  font-size: 22px;
  color: var(--muted);
}
.nav {
  flex: 1;
  min-height: 0;
  padding-top: 25px;
  overflow-y: auto;
  scrollbar-width: none;
}
.nav-section {
  padding: 42px 0 13px;
}
.nav-label {
  margin-bottom: 16px;
  padding-left: 36px;
  font-size: 20px;
  font-weight: 700;
  line-height: 24px;
  letter-spacing: 0.12em;
  text-transform: uppercase;
  color: var(--muted);
}
.nav-link {
  display: flex;
  align-items: center;
  gap: 24px;
  height: 76px;
  padding-left: 36px;
  border-left: 4px solid transparent;
  font-size: 27px;
  font-weight: 500;
}
.nav-link:nth-child(3n) {
  height: 77px;
}
.nav-link.active {
  border-color: var(--teal);
  background: rgba(26, 188, 156, 0.12);
}
.nav-icon {
  display: grid;
  place-items: center;
  width: 36px;
}
.sidebar-footer {
  display: flex;
  align-items: center;
  justify-content: space-between;
  padding: 20px 36px;
  border-top: 2px solid var(--line);
  font-size: 22px;
  color: var(--muted);
}
.collapse-btn {
  display: grid;
  place-items: center;
  width: 56px;
  height: 56px;
  padding: 0;
  border: 2px solid var(--line);
  border-radius: 12px;
  background: none;
  color: var(--soft);
}

/* Top bar */
.page {
  display: flex;
  flex-direction: column;
  min-width: 0;
  min-height: 0;
}
.topbar {
  display: flex;
  align-items: center;
  gap: 32px;
  padding: 28px 44px 26px;
  border-bottom: 2px solid var(--line);
}
.topbar-title {
  margin: -8px 0;
  padding-top: 2px;
  white-space: nowrap;
}
.topbar-title strong {
  display: block;
  font-weight: 600;
}
.search {
  display: flex;
  align-items: center;
  flex: 1;
  gap: 30px;
  height: 72px;
  padding: 0 22px;
  border: 2px solid var(--line);
  border-radius: 16px;
  background: var(--surface);
  color: var(--muted);
}
.search input {
  flex: 1;
  min-width: 0;
  padding: 0;
  border: 0;
  outline: 0;
  background: none;
  font-size: 27px;
}
.search input::placeholder {
  color: var(--muted);
}
.topbar-tools {
  display: flex;
  align-items: center;
  gap: 16px;
}
.clock, .tenant {
  display: flex;
  align-items: center;
  height: 64px;
  padding: 0 21px;
  border: 2px solid var(--line);
  border-radius: 16px;
  background: var(--card);
  font-size: 24px;
}
.clock {
  font-family: "DejaVu Sans Mono", monospace;
  color: var(--muted);
}
.tenant {
  gap: 14px;
  padding: 0 24px;
  border-radius: 32px;
  font-weight: 500;
}
.dot {
  width: 12px;
  height: 12px;
  border-radius: 50%;
  background: #22c55e;
}
.icon-btn {
  display: grid;
  place-items: center;
  width: 72px;
  height: 72px;
  padding: 0;
  border: 2px solid var(--line);
  border-radius: 16px;
  background: var(--card);
  color: var(--soft);
}
.user {
  display: flex;
  align-items: center;
  gap: 20px;
  padding: 0 16px 0 8px;
  border: 0;
  background: none;
  text-align: left;
}
.avatar {
  display: grid;
  place-items: center;
  width: 64px;
  height: 64px;
  border-radius: 50%;
  background: linear-gradient(135deg, var(--teal), var(--teal-dark));
  font-size: 24px;
  font-weight: 700;
}
.user-text {
  display: flex;
  flex-direction: column;
  padding-bottom: 6px;
}
.user-name {
  font-size: 26px;
  font-weight: 600;
  line-height: 32px;
}
.user-role {
  font-size: 20px;
  line-height: 24px;
  letter-spacing: 1px;
  color: var(--muted);
}
.breadcrumb {
  padding: 18px 44px;
  border-bottom: 2px solid var(--line);
  font-size: 24px;
  line-height: 40px;
  color: var(--muted);
}
.breadcrumb strong {
  font-weight: 600;
  color: var(--soft);
}

/* Content */
.content {
  flex: 1;
  min-height: 0;
  padding: 44px;
  overflow-y: auto;
  scrollbar-width: none;
}
.page-header {
  display: flex;
  align-items: flex-start;
  justify-content: space-between;
  margin-bottom: 31px;
}
.page-header h1 {
  margin-bottom: 11px;
  font-size: 44px;
  font-weight: 600;
  line-height: 52px;
  letter-spacing: -0.02em;
}
.page-header p {
  line-height: 40px;
  font-size: 26px;
  color: var(--muted);
}
.btn-refresh {
  display: flex;
  align-items: center;
  gap: 12px;
  height: 64px;
  padding: 0 28px;
  border: 2px solid transparent;
  border-radius: 12px;
  background: linear-gradient(135deg, var(--teal), var(--teal-dark)) border-box;
  box-shadow: 0 8px 48px rgba(26, 188, 156, 0.35);
  font-size: 26px;
  font-weight: 500;
}
.btn-refresh .icon {
  width: 26px;
  height: 26px;
}
.stats {
  display: grid;
  grid-template-columns: repeat(4, 1fr);
  gap: 40px;
  margin-bottom: 56px;
}
.stat, .card {
  border: 2px solid var(--line);
  border-radius: 20px;
  background: var(--card);
  box-shadow: 0 2px 8px rgba(0, 0, 0, 0.3);
}
.stat {
  display: flex;
  align-items: center;
  gap: 32px;
  padding: 48px;
}
.stat-icon {
  display: grid;
  place-items: center;
  flex: none;
  width: 96px;
  height: 96px;
  border-radius: 16px;
}
.stat-icon .icon {
  width: 40px;
  height: 40px;
}
.stat-value {
  margin-bottom: 6px;
  font-size: 56px;
  font-weight: 700;
  line-height: 56px;
}
.stat-label {
  font-size: 26px;
  color: var(--muted);
}
.red {
  background: linear-gradient(135deg, #e74c3c, #c0392b);
}
.orange {
  background: linear-gradient(135deg, #e67e22, #d35400);
}
.purple {
  background: linear-gradient(135deg, #8e44ad, #6c3483);
}
.teal {
  background: linear-gradient(135deg, var(--teal), var(--teal-dark));
}
.card {
  margin-bottom: 48px;
}
.card-header {
  display: flex;
  align-items: center;
  gap: 16px;
  padding: 48px;
  border-bottom: 2px solid var(--line);
}
.card-header h2 {
  font-size: 32px;
  font-weight: 700;
  line-height: 32px;
}
.card-header .icon {
  width: 32px;
  height: 32px;
  color: var(--teal);
}
.card-header .icon-wide {
  width: 40px;
}
.card-body {
  padding: 48px;
}
.match-summary {
  display: flex;
  gap: 47px;
  margin-bottom: 32px;
  padding: 22px 32px;
  border: 2px solid rgba(241, 196, 15, 0.2);
  border-radius: 16px;
  background: rgba(241, 196, 15, 0.12);
  color: #f1c40f;
  font-size: 26px;
}
.match-summary > * {
  display: flex;
  align-items: center;
  gap: 15px;
}
.match-summary .icon {
  width: 26px;
  height: 26px;
}
.match-summary .icon-percent {
  width: 20px;
}

/* IOC table */
.ioc-table {
  width: 100%;
  border-spacing: 0;
  font-size: 26px;
  text-align: left;
}
.ioc-table th {
  height: 90px;
  padding: 0 28px;
  border-bottom: 2px solid var(--line);
  background: #1a2a3b;
  color: var(--soft);
  font-weight: 600;
}
.ioc-table td {
  height: 83px;
  padding: 0 28px;
  border-bottom: 2px solid #fff5f5;
  background: #fff5f5;
}
.ioc-table tr:last-child td {
  height: 84px;
}
.ioc-table code {
  font-family: "Liberation Mono", monospace;
  font-weight: 700;
}
.ioc-table .hits {
  color: #e74c3c;
  font-weight: 700;
}
.badge {
  display: inline-block;
  padding: 0 16px;
  border-radius: 8px;
  font-size: 22px;
  font-weight: 600;
  line-height: 40px;
}
.badge.tlp {
  font-weight: 700;
}
.green {
  background: #27ae60;
}
.amber {
  background: #e67e22;
}
.blue {
  background: #3498db;
}
.crimson {
  background: #e74c3c;
}

/* Word clouds */
.clouds {
  display: grid;
  grid-template-columns: repeat(3, 1fr);
  gap: 48px;
}
.cloud {
  padding: 0 8px;
}
.cloud h3 {
  font-size: 26px;
  font-weight: 400;
  line-height: 38px;
  letter-spacing: 1px;
  text-transform: uppercase;
  color: var(--muted);
}
.cloud-canvas {
  position: relative;
  height: 400px;
}
.cloud-word {
  position: absolute;
  left: 486px;
  top: 0;
  font-size: 78px;
  line-height: 66px;
  color: #48c9b0;
}
```
